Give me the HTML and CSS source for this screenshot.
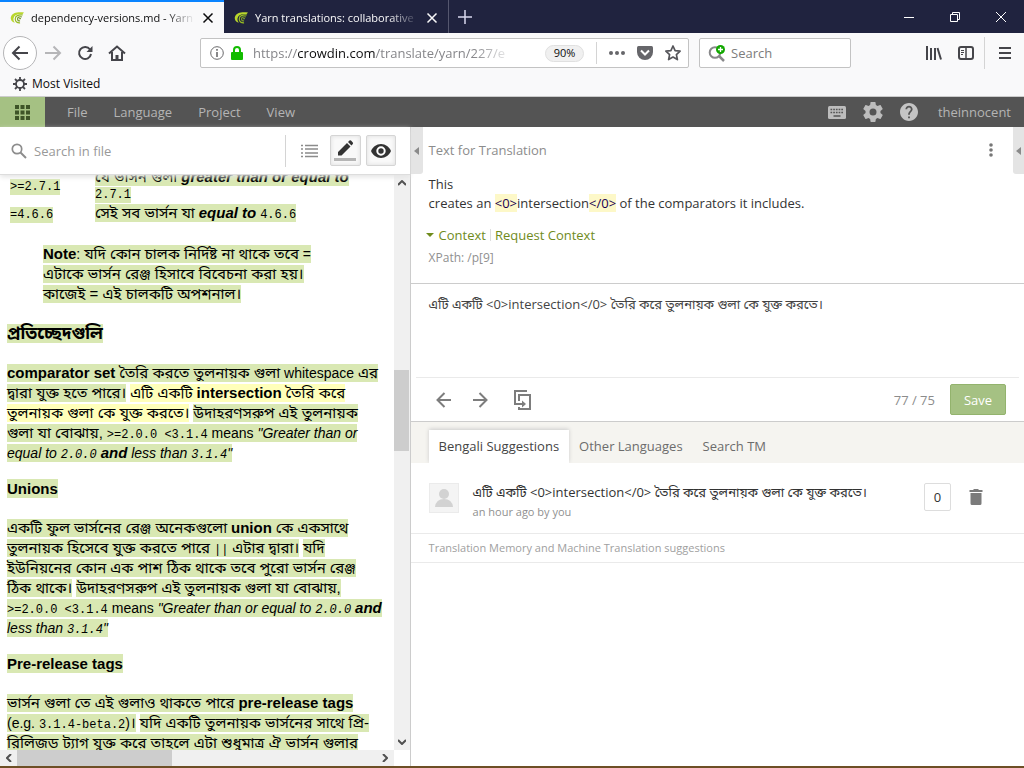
FILE: index.html
```html
<!DOCTYPE html>
<html lang="en">
<head>
<meta charset="utf-8">
<title>dependency-versions.md - Yarn</title>
<link rel="stylesheet" href="styles.css">
</head>
<body>
<svg class="defs" width="0" height="0" aria-hidden="true">
  <symbol id="crowdin" viewBox="0 0 16 16">
    <path d="M16 1.800C9 .8 2.500 2 .9 7c-.5 3 1.300 5.500 4.600 6.500C3.800 11 3.500 9 4.500 7 6 4.200 10 3.500 14.500 3.500z" fill="#b9d62c"/>
    <path d="M14.500 4.500C9.500 4 6 5.500 6 9c0 3 2.200 4.900 5.500 4.600" fill="none" stroke="#98bd22" stroke-width="1.400"/>
    <path d="M13.500 6.700c-2.800-.5-4.900.5-4.900 2.500 0 1.400 1 2.300 2.900 2.200M12.500 8.700c-1-.1-1.700.1-1.700.6" fill="none" stroke="#7b9c2c" stroke-width="1.400"/>
  </symbol>
  <symbol id="close" viewBox="0 0 12 12"><path d="M1.500 1.500l9 9M10.500 1.500l-9 9" fill="none" stroke="currentColor" stroke-width="1.500"/></symbol>
  <symbol id="mag" viewBox="0 0 16 16"><circle cx="6" cy="6" r="4.700" fill="none" stroke="currentColor" stroke-width="1.700"/><path d="M9.500 9.500L15 15" stroke="currentColor" stroke-width="2"/></symbol>
</svg>

<header class="browser">
  <div class="tabs">
    <div class="tab active"><svg class="fav"><use href="#crowdin"/></svg><span class="tab-title">dependency-versions.md - Yarn</span><button class="x" aria-label="Close tab"><svg><use href="#close"/></svg></button></div>
    <div class="tab"><svg class="fav"><use href="#crowdin"/></svg><span class="tab-title">Yarn translations: collaborative</span><button class="x" aria-label="Close tab"><svg><use href="#close"/></svg></button></div>
    <button class="newtab" aria-label="New tab"><svg width="14" height="14"><path d="M7 0v14M0 7h14" stroke="#d8d8ee" stroke-width="1.500"/></svg></button>
    <div class="win">
      <button aria-label="Minimize"><svg width="10" height="10"><path d="M0 5.500h10" stroke="#fff"/></svg></button>
      <button aria-label="Restore"><svg width="10" height="10" fill="none" stroke="#fff"><path d="M.5 2.500h7v7h-7zM2.500 2.500v-2h7v7h-2"/></svg></button>
      <button aria-label="Close"><svg width="10" height="10"><path d="M0 0l10 10M10 0L0 10" stroke="#fff"/></svg></button>
    </div>
  </div>
  <div class="nav">
    <button class="back" aria-label="Back"><svg width="18" height="16" fill="none" stroke="#45454a" stroke-width="2"><path d="M17 8H2M8.500 1.500L2 8l6.500 6.500"/></svg></button>
    <button aria-label="Forward"><svg width="18" height="16" fill="none" stroke="#b6b6b8" stroke-width="2"><path d="M1 8h15M9.500 1.500L16 8l-6.500 6.500"/></svg></button>
    <button aria-label="Reload"><svg width="16" height="16" fill="none" stroke="#45454a" stroke-width="2"><path d="M13 4.500A6 6 0 1 0 14 9"/><path d="M15.500 1v6h-6z" fill="#45454a" stroke="none"/></svg></button>
    <button aria-label="Home"><svg width="18" height="16" fill="none" stroke="#45454a" stroke-width="2"><path d="M1 8.500L9 1.500l8 7M4 7v8h10V7"/><path d="M9 15v-5" stroke-width="3"/></svg></button>
    <div class="url">
      <svg width="14" height="14" fill="none" stroke="#6a6a6c"><circle cx="7" cy="7" r="6.300"/><path d="M7 6v5M7 3v1.700" stroke-width="1.600"/></svg>
      <svg width="12" height="14" fill="#12bc00"><rect y="6" width="12" height="8" rx="1"/><path d="M3 7V4a3 3 0 0 1 6 0v3" fill="none" stroke="#12bc00" stroke-width="2"/></svg>
      <div class="address" role="textbox" aria-label="Address">https://<b>crowdin.com</b>/translate/yarn/227/e</div>
      <button class="zoom">90%</button>
      <span class="sep"></span>
      <button aria-label="Page actions"><svg width="16" height="4" fill="#66666a"><circle cx="2" cy="2" r="2"/><circle cx="8" cy="2" r="2"/><circle cx="14" cy="2" r="2"/></svg></button>
      <button aria-label="Pocket"><svg width="16" height="14"><path d="M1.500 0h13Q16 0 16 1.500V6a8 8 0 0 1-16 0V1.500Q0 0 1.500 0z" fill="#66666a"/><path d="M4 4.500l4 4 4-4" fill="none" stroke="#fff" stroke-width="2"/></svg></button>
      <button aria-label="Bookmark"><svg width="16" height="16" fill="none" stroke="#55555a" stroke-width="1.700" stroke-linejoin="round"><path d="M8 1l2.100 4.600 5 .6-3.700 3.400 1 5L8 12.100l-4.400 2.500 1-5L.9 6.200l5-.6z"/></svg></button>
    </div>
    <div class="sbox">
      <svg width="18" height="17" fill="none"><circle cx="7" cy="7.500" r="5.300" stroke="#88888a" stroke-width="2"/><path d="M11 11l5 5" stroke="#88888a" stroke-width="2.500"/><circle cx="12.500" cy="4.500" r="4.500" fill="#12a800"/><path d="M12.500 2v5M10 4.500h5" stroke="#fff" stroke-width="1.300"/></svg>
      <input type="text" placeholder="Search" aria-label="Search the web">
    </div>
    <div class="tools">
      <button aria-label="Library"><svg width="16" height="14" stroke="#45454a" stroke-width="2"><path d="M1 0v14M5 2v12M9 2v12M11.500 2L15 13.500"/></svg></button>
      <button aria-label="Sidebars"><svg width="16" height="14" fill="none" stroke="#45454a" stroke-width="2"><rect x="1" y="1" width="14" height="12" rx="2"/><path d="M8 1v12" stroke-width="1.500"/><path d="M3 4.500h3M3 6.500h3M3 8.500h2" stroke-width="1"/></svg></button>
      <span class="sep tall"></span>
      <button aria-label="Menu"><svg width="12" height="12" stroke="#45454a" stroke-width="2"><path d="M0 1h12M0 6h12M0 11h12"/></svg></button>
    </div>
  </div>
  <div class="bookmarks">
    <svg width="14" height="14" fill="none" stroke="#45454a"><circle cx="7" cy="7" r="4" stroke-width="1.800"/><path d="M7 0v3M7 11v3M0 7h3M11 7h3M2 2l2.200 2.200M9.800 9.800L12 12M12 2L9.800 4.200M4.200 9.800L2 12" stroke-width="1.800"/></svg>
    <a href="#">Most Visited</a>
  </div>
</header>

<nav class="appbar">
  <button class="grid" aria-label="Apps"><svg width="15" height="15" fill="#3e5428"><path d="M0 0h4v4H0zM5.500 0h4v4h-4zM11 0h4v4h-4zM0 5.500h4v4H0zM5.500 5.500h4v4h-4zM11 5.500h4v4h-4zM0 11h4v4H0zM5.500 11h4v4h-4zM11 11h4v4h-4z"/></svg></button>
  <div class="menu"><a href="#">File</a><a href="#">Language</a><a href="#">Project</a><a href="#">View</a></div>
  <div class="user">
    <button aria-label="Keyboard shortcuts"><svg width="18" height="13"><rect width="18" height="13" rx="1.500" fill="#bdbdbd"/><path d="M2.500 3.500h13M2.500 6.500h13" stroke="#555" stroke-width="1.700" stroke-dasharray="1.700 1"/><path d="M5.500 10h7" stroke="#555" stroke-width="1.500"/></svg></button>
    <button aria-label="Settings"><svg width="20" height="20" viewBox="2 2 20 20"><path fill="#bdbdbd" d="M19.430 12.980c.04-.32.070-.64.070-.98s-.03-.66-.07-.98l2.110-1.650c.19-.15.240-.42.120-.64l-2-3.460c-.12-.22-.39-.3-.61-.22l-2.490 1c-.52-.4-1.080-.73-1.690-.98l-.38-2.650C14.460 2.180 14.250 2 14 2h-4c-.25 0-.46.18-.49.42l-.38 2.650c-.61.25-1.170.59-1.690.98l-2.490-1c-.23-.09-.49 0-.61.22l-2 3.460c-.13.22-.07.49.12.64l2.110 1.650c-.04.32-.07.65-.07.98s.03.66.07.98l-2.110 1.650c-.19.15-.24.42-.12.64l2 3.460c.12.22.39.3.61.22l2.490-1c.52.4 1.080.73 1.690.98l.38 2.650c.03.24.24.42.49.42h4c.25 0 .46-.18.49-.42l.38-2.650c.61-.25 1.170-.59 1.690-.98l2.490 1c.23.09.49 0 .61-.22l2-3.460c.12-.22.07-.49-.12-.64l-2.110-1.650zM12 15.500a3.500 3.500 0 1 1 0-7 3.500 3.500 0 0 1 0 7z"/></svg></button>
    <button aria-label="Help"><svg width="18" height="18" viewBox="2 2 20 20"><path fill="#c4c4c4" d="M12 2C6.480 2 2 6.480 2 12s4.480 10 10 10 10-4.480 10-10S17.520 2 12 2zm1 17h-2v-2h2v2zm2.070-7.750l-.9.920C13.450 12.900 13 13.500 13 15h-2v-.5c0-1.100.45-2.100 1.170-2.830l1.240-1.260c.37-.36.590-.86.590-1.410 0-1.100-.9-2-2-2s-2 .9-2 2H8c0-2.210 1.790-4 4-4s4 1.790 4 4c0 .88-.36 1.680-.93 2.250z"/></svg></button>
    <a href="#">theinnocent</a>
  </div>
</nav>

<main>
  <section class="left">
    <div class="filebar">
      <svg class="mag"><use href="#mag"/></svg>
      <input type="text" placeholder="Search in file" aria-label="Search in file">
      <span class="sep tall"></span>
      <button aria-label="List view"><svg width="17" height="14" stroke="#8b8b8b" stroke-width="1.500"><path d="M0 1.500h2M0 5h2M0 9h2M0 12.500h2M4 1.500h13M4 5h13M4 9h13M4 12.500h13"/></svg></button>
      <button class="on" aria-label="Edit mode"><svg width="22" height="21"><path d="M4 12l9-9 3.500 3.500-9 9H4zM14 2l1.500-1.500Q16.200 0 17 .6l1.800 1.800q.6.700 0 1.500L17.500 5.500z" fill="#333"/><path d="M0 19.500h22" stroke="#b5b5b5" stroke-width="3"/></svg></button>
      <button class="on" aria-label="Preview"><svg width="20" height="14"><path d="M10 0C5.500 0 1.700 2.900 0 7c1.700 4.100 5.500 7 10 7s8.300-2.900 10-7c-1.700-4.100-5.500-7-10-7z" fill="#333"/><circle cx="10" cy="7" r="3.700" fill="#333" stroke="#fff" stroke-width="2"/></svg></button>
    </div>
    <div class="doc">
      <div class="page">
        <table>
          <tr><td><code class="hl">&gt;=2.7.1</code></td><td><span class="hl"><i class="bn">যে ভার্সন গুলা</i> <b><em>greater than or equal to</em></b></span><br><code class="hl">2.7.1</code></td></tr>
          <tr><td><code class="hl">=4.6.6</code></td><td><span class="hl"><i class="bn">সেই সব ভার্সন যা</i> <b><em>equal to</em></b> <code>4.6.6</code></span></td></tr>
        </table>
        <blockquote><span class="hl"><b>Note</b>: <i class="bn">যদি কোন চালক নির্দিষ্ট না থাকে তবে</i> =<br><i class="bn">এটাকে ভার্সন রেঞ্জ হিসাবে বিবেচনা করা হয়।</i><br><i class="bn">কাজেই = এই চালকটি অপশনাল।</i></span></blockquote>
        <h3><span class="hl"><i class="bn">প্রতিচ্ছেদগুলি</i></span></h3>
        <p><span class="hl"><b>comparator set</b> <i class="bn">তৈরি করতে তুলনায়ক গুলা</i> whitespace <i class="bn">এর<br>দ্বারা যুক্ত হতে পারে।</i></span> <span class="hl cur"><i class="bn">এটি একটি</i> <b>intersection</b> <i class="bn">তৈরি করে<br>তুলনায়ক গুলা কে যুক্ত করতে।</i></span> <span class="hl"><i class="bn">উদাহরণসরুপ এই তুলনায়ক<br>গুলা যা বোঝায়,</i> <code>&gt;=2.0.0 &lt;3.1.4</code> means <em>"Greater than or<br>equal to <code>2.0.0</code> <b>and</b> less than <code>3.1.4</code>"</em></span></p>
        <h3><span class="hl">Unions</span></h3>
        <p><span class="hl"><i class="bn">একটি ফুল ভার্সনের রেঞ্জ অনেকগুলো</i> <b>union</b> <i class="bn">কে একসাথে<br>তুলনায়ক হিসেবে যুক্ত করতে পারে</i> <code>||</code> <i class="bn">এটার দ্বারা।</i></span> <span class="hl"><i class="bn">যদি<br>ইউনিয়নের কোন এক পাশ ঠিক থাকে তবে পুরো ভার্সন রেঞ্জ<br>ঠিক থাকে।</i></span> <span class="hl"><i class="bn">উদাহরণসরুপ এই তুলনায়ক গুলা যা বোঝায়,</i><br><code>&gt;=2.0.0 &lt;3.1.4</code> means <em>"Greater than or equal to <code>2.0.0</code> <b>and</b><br>less than <code>3.1.4</code>"</em></span></p>
        <h3><span class="hl">Pre-release tags</span></h3>
        <p><span class="hl"><i class="bn">ভার্সন গুলা তে এই গুলাও থাকতে পারে</i> <b>pre-release tags</b><br>(e.g. <code>3.1.4-beta.2</code>)<i class="bn">।</i></span> <span class="hl"><i class="bn">যদি একটি তুলনায়ক ভার্সনের সাথে প্রি-<br>রিলিজড ট্যাগ যুক্ত করে তাহলে এটা শুধুমাত্র ঐ ভার্সন গুলার</i></span></p>
      </div>
      <div class="vbar"><svg width="8" height="6"><path d="M0 5l4-4 4 4"/></svg><span class="vthumb"></span><svg width="8" height="6"><path d="M0 1l4 4 4-4"/></svg></div>
      <div class="hbar"><svg width="6" height="8"><path d="M5 0L1 4l4 4"/></svg><span class="hthumb"></span><svg width="6" height="8"><path d="M1 0l4 4-4 4"/></svg></div>
    </div>
  </section>

  <section class="right">
    <button class="fold l" aria-label="Collapse left"><svg width="5" height="8"><path d="M5 0v8L0 4z" fill="#8a8a8a"/></svg></button>
    <button class="fold r" aria-label="Expand right"><svg width="5" height="8"><path d="M5 0v8L0 4z" fill="#8a8a8a"/></svg></button>
    <div class="source">
      <div class="src-head"><h2>Text for Translation</h2><button aria-label="More"><svg width="4" height="14" fill="#777"><circle cx="2" cy="2" r="1.800"/><circle cx="2" cy="7" r="1.800"/><circle cx="2" cy="12" r="1.800"/></svg></button></div>
      <div class="src-text">This<br>creates an <mark>&lt;0&gt;</mark>intersection<mark>&lt;/0&gt;</mark> of the comparators it includes.</div>
      <div class="ctx"><svg width="8" height="4"><path d="M0 0h8L4 4z" fill="#6f8b1c"/></svg><a href="#">Context</a><span class="bar"></span><a href="#">Request Context</a></div>
      <div class="xpath">XPath: /p[9]</div>
    </div>
    <div class="editor">
      <textarea aria-label="Translation" spellcheck="false">এটি একটি &lt;0&gt;intersection&lt;/0&gt; তৈরি করে তুলনায়ক গুলা কে যুক্ত করতে।</textarea>
      <div class="actions">
        <button aria-label="Previous"><svg width="16" height="16"><path d="M15 8H2M8.500 1L1.500 8l7 7"/></svg></button>
        <button aria-label="Next"><svg width="16" height="16"><path d="M1 8h13M7.500 1l7 7-7 7"/></svg></button>
        <button class="copy" aria-label="Copy source"><svg width="18" height="20"><path d="M13 1H1v13h8M5 11V5h11v14H5v-2"/><path d="M8 10.500v7l4-3.500z" fill="#7d7d7d" stroke="none"/></svg></button>
        <span class="count">77 / 75</span>
        <button class="save">Save</button>
      </div>
    </div>
    <div class="stabs" role="tablist"><button class="sel" role="tab">Bengali Suggestions</button><button role="tab">Other Languages</button><button role="tab">Search TM</button></div>
    <div class="sugg">
      <svg class="avatar" width="30" height="30"><rect x=".5" y=".5" width="29" height="29" fill="#f4f4f4" stroke="#ebebeb"/><circle cx="15" cy="11" r="5" fill="#d2d2d2"/><path d="M6 24q1-8 9-8t9 8z" fill="#d2d2d2"/></svg>
      <div class="body"><div class="txt">এটি একটি &lt;0&gt;intersection&lt;/0&gt; তৈরি করে তুলনায়ক গুলা কে যুক্ত করতে।</div><div class="by">an hour ago by you</div></div>
      <button class="votes">0</button>
      <button class="del" aria-label="Delete"><svg width="14" height="16" fill="#7b7b7b"><path d="M1.500 4h11v10.500q0 1.500-1.500 1.500H3q-1.500 0-1.500-1.500zM.5 1H4l1-1h4l1 1h3.500v2H.5z"/></svg></button>
    </div>
    <div class="tm">Translation Memory and Machine Translation suggestions</div>
  </section>
</main>
<footer class="strip"></footer>
</body>
</html>
```
FILE: styles.css
```css
* { box-sizing: border-box; }
html, body { height: 100%; margin: 0; }
body {
  display: flex; flex-direction: column; overflow: hidden;
  font: 13px/18px "Open Sans", "Noto Sans", "Noto Sans Bengali", sans-serif;
  color: #333; background: #fff;
}
button { border: 0; padding: 0; background: none; font: inherit; color: inherit; display: flex; align-items: center; justify-content: center; flex: none; }
input, textarea { border: 0; outline: 0; padding: 0; margin: 0; background: none; font: inherit; color: inherit; min-width: 0; }
a { color: inherit; text-decoration: none; }
svg { display: block; flex: none; }
.defs { position: absolute; }
.sep { width: 1px; height: 22px; background: #d4d4d4; flex: none; }
.sep.tall { height: 32px; }

/* browser window */
.browser { background: #f9f9fa; font-size: 12px; color: #0c0c0d; border-bottom: 1px solid #ccc; flex: none; }
.tabs { display: flex; height: 33px; background: #20233f; }
.tab { width: 225px; display: flex; align-items: center; gap: 7px; padding: 2px 10px 0; color: #f9f9fa; border-right: 1px solid #55576f; }
.tab.active { width: 224px; background: #f9f9fa; color: #0c0c0d; border-top: 2px solid #0a84ff; border-right: 0; padding-top: 0; }
.tab .fav { width: 14px; height: 14px; }
.tab-title { flex: 1; min-width: 0; font-size: 11px; overflow: hidden; white-space: nowrap; -webkit-mask-image: linear-gradient(to left, transparent, #000 30px); mask-image: linear-gradient(to left, transparent, #000 30px); }
.x svg { width: 12px; height: 12px; }
.newtab { width: 32px; }
.win { margin-left: auto; display: flex; }
.win button { width: 46px; }
.nav { display: flex; align-items: center; height: 40px; padding: 0 9px 0 3px; }
.nav > button { width: 32px; height: 32px; }
.nav > .back { width: 34px; height: 34px; border: 1px solid #b5b5b7; border-radius: 50%; background: #fff; }
.url, .sbox { display: flex; align-items: center; height: 30px; border: 1px solid #c3c3c3; border-radius: 2px; background: #fff; }
.url { flex: 1; margin-left: 67px; padding: 0 7px 0 9px; gap: 7px; min-width: 0; }
.address { flex: 1; min-width: 0; margin-left: 3px; font-size: 13px; color: #86868a; overflow: hidden; white-space: nowrap; -webkit-mask-image: linear-gradient(to left, transparent, #000 40px); mask-image: linear-gradient(to left, transparent, #000 40px); }
.address b { font-weight: 400; color: #0c0c0d; }
.zoom { width: 39px; height: 17px; margin: 0 5px 0 24px; border: 1px solid #e0e0e0; border-radius: 9px; background: #f0f0f0; font-size: 11px; }
.url .sep { margin-right: 5px; }
.url button + button { margin-left: 5px; }
.sbox { flex: 0 1 152px; margin-left: 10px; padding: 0 8px; gap: 5px; min-width: 0; }
.sbox input { flex: 1; font-size: 13px; }
.sbox input::placeholder { color: #7c7c7c; }
.tools { flex: 0 0 164px; display: flex; align-items: center; justify-content: flex-end; gap: 16px; padding-right: 4px; }
.tools .sep { margin: 0 -2px 0 -6px; }
.bookmarks { display: flex; align-items: center; gap: 5px; height: 23px; padding: 0 13px 1px; }

/* application bar */
.appbar { display: flex; height: 30px; background: #545454; color: #b4b4b4; flex: none; }
.grid { width: 45px; background: #a5c183; }
.menu { display: flex; align-items: center; gap: 26px; padding-left: 22px; }
.user { display: flex; align-items: center; gap: 17px; margin-left: auto; padding-right: 13px; }
.user a { margin-left: 3px; }

main { flex: 1; min-height: 0; display: flex; }

/* file preview */
.left { width: 40%; min-width: 0; display: flex; flex-direction: column; }
.filebar { display: flex; align-items: center; gap: 5px; height: 48px; padding: 0 14px 0 11px; border-bottom: 1px solid #ddd; box-shadow: 0 2px 5px #e4e4e4; flex: none; position: relative; z-index: 1; background: #fff; }
.filebar .mag { width: 16px; height: 16px; color: #8d8d8d; margin-right: 2px; }
.filebar input { flex: 1; }
.filebar input::placeholder { color: #999; }
.filebar button { width: 31px; height: 31px; }
.filebar .sep { margin-right: 3px; }
.filebar .on { border: 1px solid #d5d5d5; border-radius: 2px; background: #f9f9f9; box-shadow: inset 0 0 4px #ddd; }
.filebar .on + .on { width: 30px; }
.doc { flex: 1; min-height: 0; display: grid; grid-template: minmax(0, 1fr) 16px / minmax(0, 1fr) 16px; }
.page { overflow: hidden; padding-left: 7px; font: 14px/20px "Liberation Sans", "Noto Sans Bengali", sans-serif; color: #000; white-space: nowrap; }
.page table { border-collapse: collapse; margin-top: -10px; }
.page td { vertical-align: top; padding: 4px 0 0 3px; line-height: 16px; }
.page td:first-child { width: 85px; vertical-align: middle; }
.hl { background: #d9e8b3; padding: 1px 0; }
.cur { background: #ffffba; }
.bn { font-style: normal; font-size: 15px; line-height: 16px; }
.page b, h3 { font-size: 15px; font-weight: 700; }
h3 .bn { font-size: 17px; }
code { font: 12px/12px "Liberation Mono", monospace; }
em code { font-style: italic; }
.page p, .page h3 { margin: 0 0 19px; line-height: 20px; }
.page p { margin-bottom: 16px; }
.page blockquote { margin: 23px 36px 20px; line-height: 20px; }
.vbar { background: #f0f0f0; display: grid; grid-template-rows: 16px minmax(0, 1fr) 16px; place-items: center; }
.hbar { background: #f0f0f0; display: grid; grid-template-columns: 17px minmax(0, 1fr) 17px; place-items: center; }
.vbar path, .hbar path { fill: none; stroke: #505050; stroke-width: 2; }
.vthumb { width: 15px; height: 81px; align-self: start; position: relative; top: 33%; background: #cdcdcd; }
.hthumb { width: 43%; height: 100%; justify-self: start; background: #cdcdcd; }

/* translation panel */
.right { flex: 1; min-width: 0; border-left: 1px solid #ccc; position: relative; }
.fold { position: absolute; top: 0; width: 12px; height: 47px; background: #e4e4e4; }
.fold.l { left: 0; border-radius: 0 0 3px 0; }
.fold.r { right: 0; width: 11px; border-radius: 0 0 0 3px; }
.source { padding: 14px 31px 16px 18px; border-bottom: 1px solid #ccc; }
.src-head { display: flex; justify-content: space-between; align-items: center; }
h2 { margin: 0; font-size: 13px; line-height: 18px; font-weight: 400; color: #8c8c8c; }
.src-text { margin-top: 16px; line-height: 19px; }
mark { background: #fdf8c8; color: #1a0050; }
.ctx { display: flex; align-items: center; margin: 13px 0 0 -3px; color: #6f8b1c; }
.ctx svg { margin-right: 5px; }
.ctx .bar { width: 1px; height: 12px; background: #ddd; margin: 0 4px; }
.xpath { margin-top: 5px; font-size: 12px; color: #909090; }
.editor { border-bottom: 1px solid #ccc; padding: 0 5px; }
textarea { display: block; width: 100%; height: 94px; padding: 11px 13px; resize: none; border-bottom: 1px solid #eaeaea; color: #444; overflow: hidden; }
.actions { display: flex; align-items: center; height: 43px; padding: 0 13px 0 20px; gap: 20px; }
.actions svg { fill: none; stroke: #7d7d7d; stroke-width: 2; }
.copy { margin-left: 6px; }
.count { margin-left: auto; color: #8c8c8c; }
.save { width: 56px; height: 31px; margin-left: -5px; background: #a5c183; border: 1px solid #93b36d; border-radius: 2px; color: #fff; }
.stabs { display: flex; align-items: flex-end; height: 41px; padding-left: 18px; background: #f5f4f0; color: #6c6c6c; }
.stabs button { height: 33px; padding: 0 10px 2px; }
.stabs .sel { background: #fff; color: #444; box-shadow: 0 -1px 4px #ccc; clip-path: inset(-5px -5px 0); }
.sugg { display: flex; align-items: flex-start; padding: 20px 41px 12px 18px; border-bottom: 1px solid #eaeaea; }
.body { flex: 1; margin-left: 14px; }
.by { font-size: 11px; line-height: 18px; margin-top: 2px; color: #909090; }
.votes { width: 27px; height: 28px; border: 1px solid #ddd; border-radius: 2px; }
.del { margin: 6px 0 0 18px; }
.tm { padding: 5px 18px; font-size: 11px; line-height: 18px; color: #a0a0a0; border-bottom: 1px solid #eaeaea; }
.strip { height: 2px; background: #6d4f25; flex: none; }
```
